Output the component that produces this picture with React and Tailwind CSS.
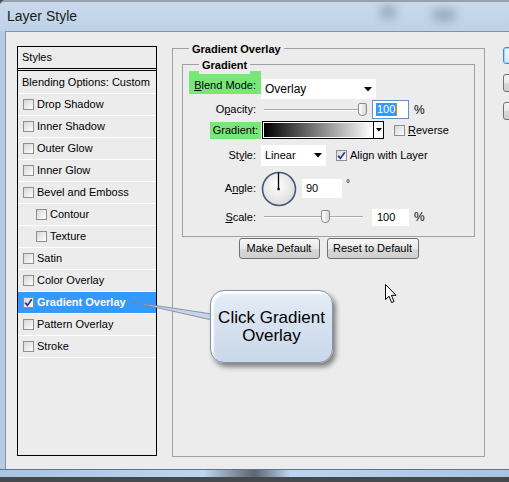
import React from "react";

function Check({ checked }) {
  return (
    <span className="w-[11px] h-[11px] shrink-0 border border-[#8e8f8f] bg-[linear-gradient(135deg,#d6d6d6,#ffffff)] flex items-center justify-center">
      {checked && (
        <svg width="9" height="9" viewBox="0 0 9 9">
          <path d="M1.2 4.6 L3.4 7.4 L7.8 1.2" stroke="#26398a" strokeWidth="1.7" fill="none" />
        </svg>
      )}
    </span>
  );
}

function Arrow() {
  return (
    <svg width="8" height="5" viewBox="0 0 8 5">
      <path d="M0 0 H8 L4 4.5 Z" fill="#000" />
    </svg>
  );
}

function Thumb({ className }) {
  return (
    <span
      className={
        "absolute top-[-1px] w-[9px] h-[13px] border border-[#8a8a8a] rounded-t-[2px] rounded-b-[4px] bg-[linear-gradient(90deg,#ffffff,#d8d8d8)] " +
        className
      }
    />
  );
}

const styles = [
  { label: "Drop Shadow" },
  { label: "Inner Shadow" },
  { label: "Outer Glow" },
  { label: "Inner Glow" },
  { label: "Bevel and Emboss" },
  { label: "Contour", sub: true },
  { label: "Texture", sub: true },
  { label: "Satin" },
  { label: "Color Overlay" },
  { label: "Gradient Overlay", active: true },
  { label: "Pattern Overlay" },
  { label: "Stroke" },
];

export default function App() {
  return (
    <div className="w-[509px] h-[482px] overflow-hidden relative bg-[#45484c] font-['Liberation_Sans',Arial,sans-serif] text-[11px] text-black">
      {/* window frame */}
      <div className="h-[477px] flex flex-col bg-[#b7cce3] border-t-[2px] border-[#97a2ae] rounded-tl-[5px] relative overflow-hidden">
        {/* title bar smudges */}
        <div className="absolute left-[380px] top-[3px] w-[16px] h-[14px] rounded-full bg-[#4a5866] opacity-35 blur-[5px]" />
        <div className="absolute left-[432px] top-[7px] w-[24px] h-[12px] rounded-full bg-[#4a5866] opacity-35 blur-[5px]" />
        <div className="h-[29px] pl-[7px] flex items-center text-[14px] text-[#1b1b1b] bg-[linear-gradient(180deg,#c9d9eb_0%,#bed2e7_100%)]">
          Layer Style
        </div>

        <div className="flex-1 flex pl-[5px]">
          {/* client area */}
          <div className="flex-1 bg-[#ececec] border-t border-l border-[#7f93ab] flex pt-[14px] pl-[11px] overflow-hidden">
            {/* styles list */}
            <div className="w-[140px] h-[410px] shrink-0 border border-black flex flex-col">
              <div className="h-[24px] pl-[4px] flex items-center border-b-[3px] border-double border-black">
                Styles
              </div>
              <div className="h-[23px] pl-[4px] flex items-center border-b border-white">
                Blending Options: Custom
              </div>
              {styles.map((s) => (
                <div
                  key={s.label}
                  className={
                    "h-[22px] flex items-center gap-[3px] border-b border-white " +
                    (s.sub ? "pl-[18px] " : "pl-[5px] ") +
                    (s.active ? "bg-[#3399ff] text-white font-bold" : "")
                  }
                >
                  <Check checked={s.active} />
                  <span>{s.label}</span>
                </div>
              ))}
            </div>

            {/* Gradient Overlay group */}
            <div className="w-[313px] h-[409px] shrink-0 ml-[15px] mt-[2px] border border-[#a0a0a0] relative px-[9px] pt-[15px]">
              <span className="absolute -top-[8px] left-[16px] px-[3px] bg-[#ececec] font-bold">
                Gradient Overlay
              </span>

              {/* Gradient inner group */}
              <div className="h-[173px] border border-[#a0a0a0] relative pt-[6px]">
                <span className="absolute -top-[8px] left-[16px] px-[3px] bg-[#ececec] font-bold">
                  Gradient
                </span>

                {/* Blend Mode */}
                <div className="h-[29px] flex items-start">
                  <div className="w-[78px] flex justify-end">
                    <span className="h-[23px] px-[5px] flex items-end pb-[1px] bg-[#77e877]">
                      <span>
                        <span className="underline">B</span>lend Mode:
                      </span>
                    </span>
                  </div>
                  <div className="mt-[8px] w-[115px] h-[20px] bg-white flex items-center justify-between pl-[4px] pr-[4px]">
                    <span className="text-[12px]">Overlay</span>
                    <Arrow />
                  </div>
                </div>

                {/* Opacity */}
                <div className="h-[19px] flex items-center">
                  <div className="w-[78px] text-right pr-[5px]">
                    O<span className="underline">p</span>acity:
                  </div>
                  <div className="ml-[3px] w-[103px] relative h-[12px] flex items-center">
                    <div className="w-full h-[2px] border-t border-[#a8a8a8] border-b border-b-white" />
                    <Thumb className="left-[94px]" />
                  </div>
                  <div className="ml-[5px] w-[37px] h-[19px] bg-white border border-[#5c93c9] flex items-center pl-[3px]">
                    <span className="bg-[#3399ff] text-white px-[1px] leading-[13px]">100</span>
                    <span className="w-[1px] h-[13px] bg-[#e07a1e]" />
                  </div>
                  <span className="ml-[5px] text-[12px]">%</span>
                </div>

                {/* Gradient */}
                <div className="mt-[2px] h-[18px] flex items-center">
                  <div className="w-[78px] flex justify-end">
                    <span className="h-[17px] px-[3px] flex items-center bg-[#77e877]">Gradient:</span>
                  </div>
                  <div className="ml-[1px] w-[122px] h-[18px] border border-black flex">
                    <div className="flex-1 bg-[linear-gradient(90deg,#000000,#ffffff)] border border-white" />
                    <div className="w-[10px] bg-white border-l border-black flex items-center justify-center">
                      <svg width="6" height="4" viewBox="0 0 6 4">
                        <path d="M0 0 H6 L3 3.5 Z" fill="#000" />
                      </svg>
                    </div>
                  </div>
                  <div className="ml-[10px] flex items-center gap-[3px]">
                    <Check />
                    <span>
                      <span className="underline">R</span>everse
                    </span>
                  </div>
                </div>

                {/* Style */}
                <div className="mt-[6px] h-[21px] flex items-center">
                  <div className="w-[78px] text-right pr-[5px]">
                    St<span className="underline">y</span>le:
                  </div>
                  <div className="w-[65px] h-[21px] bg-white flex items-center justify-between pl-[4px] pr-[4px]">
                    <span>Linear</span>
                    <Arrow />
                  </div>
                  <div className="ml-[10px] flex items-center gap-[3px]">
                    <Check checked />
                    <span>Align with Layer</span>
                  </div>
                </div>

                {/* Angle */}
                <div className="mt-[5px] h-[35px] flex items-center">
                  <div className="w-[78px] text-right pr-[5px]">
                    A<span className="underline">n</span>gle:
                  </div>
                  <svg width="36" height="36" viewBox="0 0 36 36" className="shrink-0">
                    <defs>
                      <radialGradient id="dial" cx="0.45" cy="0.4" r="0.6">
                        <stop offset="0" stopColor="#ffffff" />
                        <stop offset="1" stopColor="#dcdcdc" />
                      </radialGradient>
                    </defs>
                    <circle cx="18" cy="18" r="16.5" fill="url(#dial)" stroke="#4a5878" strokeWidth="1.6" />
                    <line x1="17.5" y1="18" x2="17.5" y2="1.5" stroke="#000" strokeWidth="1.3" />
                    <rect x="16.5" y="17" width="2.2" height="2.2" fill="#000" />
                  </svg>
                  <div className="ml-[5px] w-[40px] h-[19px] bg-white flex items-center pl-[4px]">90</div>
                  <span className="ml-[4px] self-start mt-[5px] text-[10px]">°</span>
                </div>

                {/* Scale */}
                <div className="mt-[2px] h-[18px] flex items-center">
                  <div className="w-[78px] text-right pr-[5px]">
                    <span className="underline">S</span>cale:
                  </div>
                  <div className="ml-[3px] w-[99px] relative h-[12px] flex items-center">
                    <div className="w-full h-[2px] border-t border-[#a8a8a8] border-b border-b-white" />
                    <Thumb className="left-[57px]" />
                  </div>
                  <div className="ml-[9px] w-[37px] h-[17px] bg-white flex items-center pl-[5px]">100</div>
                  <span className="ml-[5px] text-[12px]">%</span>
                </div>
              </div>

              {/* buttons */}
              <div className="mt-[1px] flex justify-center gap-[7px]">
                <button className="w-[81px] h-[21px] border border-[#707070] rounded-[3px] bg-[linear-gradient(180deg,#f6f6f6_0%,#e9e9e9_50%,#d8d8d8_51%,#cfcfcf_100%)]">
                  Make Default
                </button>
                <button className="w-[92px] h-[21px] border border-[#707070] rounded-[3px] bg-[linear-gradient(180deg,#f6f6f6_0%,#e9e9e9_50%,#d8d8d8_51%,#cfcfcf_100%)]">
                  Reset to Default
                </button>
              </div>
            </div>

            {/* right side buttons (cut off) */}
            <div className="ml-[18px] mt-[1px] flex flex-col gap-[10px] shrink-0">
              <div className="w-[70px] h-[17px] rounded-[3px] border border-[#2f8fe0] shadow-[inset_0_0_0_1px_#9fd6ff] bg-[linear-gradient(180deg,#f2f8fc,#d4e8f6)]" />
              <div className="w-[70px] h-[18px] rounded-[3px] border border-[#707070] bg-[linear-gradient(180deg,#f6f6f6_0%,#e9e9e9_50%,#d8d8d8_51%,#cfcfcf_100%)]" />
              <div className="w-[70px] h-[18px] rounded-[3px] border border-[#707070] bg-[linear-gradient(180deg,#f6f6f6_0%,#e9e9e9_50%,#d8d8d8_51%,#cfcfcf_100%)]" />
            </div>
          </div>
        </div>

        {/* bottom frame */}
        <div className="h-[8px] border-t border-[#5d7592] bg-[linear-gradient(90deg,#a9c4e0_0%,#bcd6ef_40%,#5d6470_50%,#bcd6ef_57%,#a9c4e0_100%)]" />
      </div>

      {/* callout pointer */}
      <svg className="absolute left-0 top-0 pointer-events-none" width="509" height="482">
        <polygon points="132,302 212,314 212,320" fill="#c9d5e4" stroke="#6f829e" strokeWidth="0.8" />
      </svg>

      {/* callout */}
      <div className="absolute left-[210px] top-[290px] w-[123px] h-[73px] rounded-[14px] border border-[#8092ad] bg-[linear-gradient(180deg,#e6edf6_0%,#d6e1ef_50%,#c9d7e9_100%)] shadow-[inset_3px_3px_2px_rgba(255,255,255,0.9),3px_4px_5px_rgba(0,0,0,0.45)] flex flex-col items-center justify-center text-[17px] leading-[18px]">
        <span>Click Gradient</span>
        <span>Overlay</span>
      </div>

      {/* mouse cursor */}
      <svg className="absolute left-[385px] top-[284px]" width="13" height="20" viewBox="0 0 13 20">
        <path
          d="M0.5 0.5 L0.5 15.5 L4 12.2 L6.6 18.5 L9 17.5 L6.4 11.3 L11 11.3 Z"
          fill="#fff"
          stroke="#000"
          strokeWidth="1"
        />
      </svg>
    </div>
  );
}
